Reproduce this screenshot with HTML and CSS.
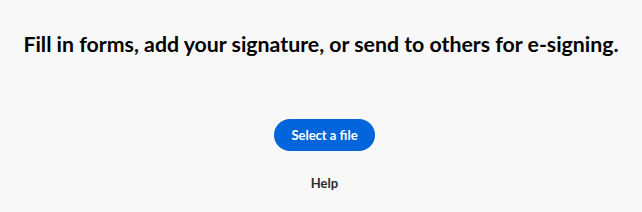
FILE: index.html
```html
<!DOCTYPE html>
<html>
<head>
  <title>Fill &amp; Sign</title>
  <link rel="stylesheet" href="styles.css">
</head>
<body>
  <div class="container">
    <h1>Fill in forms, add your signature, or send to others for e-signing.</h1>
    <div class="actions">
      <button class="button">Select a file</button>
      <a class="help-link" href="#">Help</a>
    </div>
  </div>
</body>
</html>
```

FILE: styles.css
```css
body {
  font-family: Lato, "Open Sans", sans-serif;
  background-color: #f8f8f8;
  margin: 0;
  padding: 0;
}

.container {
  display: flex;
  flex-direction: column;
  align-items: center;
  padding-top: 31px;
}

h1 {
  color: #000;
  font-size: 21.3px;
  font-weight: 700;
  margin: 0;
  line-height: 27px;
}

.actions {
  display: flex;
  flex-direction: column;
  align-items: center;
  padding-left: 7px;
}

.button {
  margin-top: 61px;
  background-color: #0265dc;
  color: white;
  font-family: inherit;
  font-size: 13px;
  font-weight: 700;
  height: 32px;
  padding: 0 17px;
  border: none;
  border-radius: 16px;
  cursor: pointer;
}

.help-link {
  margin-top: 24px;
  color: #2c2c2c;
  font-size: 13px;
  font-weight: 700;
  text-decoration: none;
}
```
